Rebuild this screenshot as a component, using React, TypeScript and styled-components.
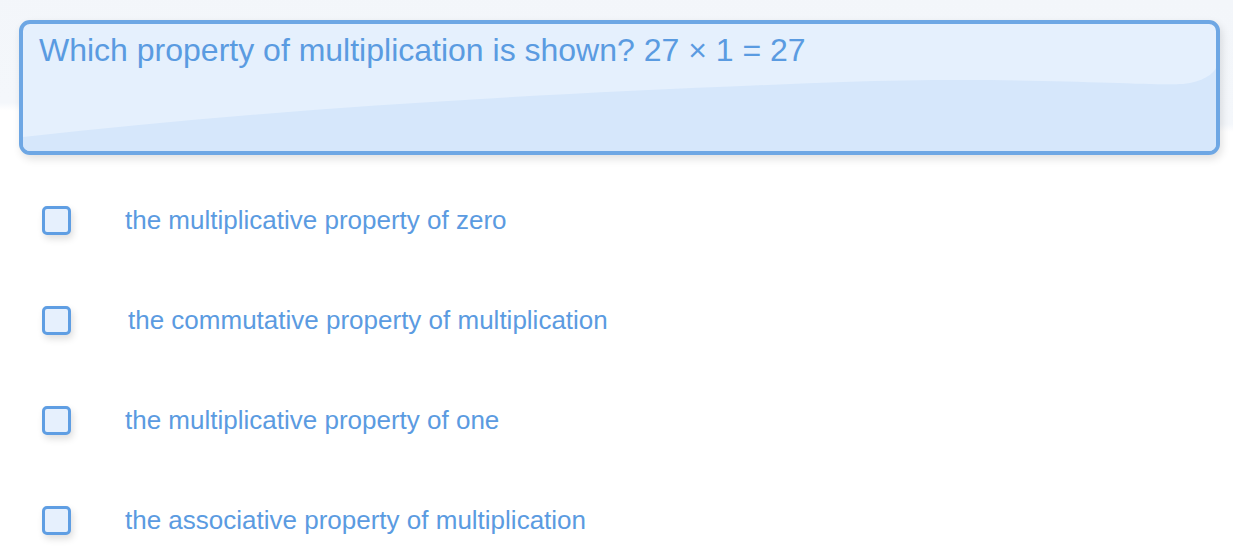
import React from 'react';
import styled, { createGlobalStyle } from 'styled-components';

const GlobalStyle = createGlobalStyle`
  html, body {
    margin: 0;
    padding: 0;
    background: #ffffff;
  }
  body {
    font-family: "Liberation Sans", Arial, sans-serif;
  }
`;

const options = [
  { id: 1, text: 'the multiplicative property of zero', nudge: 0 },
  { id: 2, text: 'the commutative property of multiplication', nudge: 3 },
  { id: 3, text: 'the multiplicative property of one', nudge: 0 },
  { id: 4, text: 'the associative property of multiplication', nudge: 0 },
];

export default function App(): JSX.Element {
  return (
    <Page>
      <GlobalStyle />
      <Question>
        <Gloss viewBox="0 0 1193 127" preserveAspectRatio="none">
          <path
            d="M0 113 C 250 85, 500 70, 820 58 C 1000 52, 1120 62, 1160 60 C 1180 58, 1190 50, 1193 44 L1193 127 L0 127 Z"
            fill="#d6e7fb"
          />
        </Gloss>
        <QuestionText>Which property of multiplication is shown? 27 × 1 = 27</QuestionText>
      </Question>
      <Options>
        {options.map((o) => (
          <Option key={o.id}>
            <Box />
            <Label nudge={o.nudge}>{o.text}</Label>
          </Option>
        ))}
      </Options>
    </Page>
  );
}

const Page = styled.div`
  width: 1233px;
  height: 547px;
  box-sizing: border-box;
  padding: 20px 0 0 19px;
  overflow: hidden;
  background: linear-gradient(181deg, #f3f6fa 0, #f4f7fb 124px, #ffffff 132px);
`;

const Question = styled.div`
  position: relative;
  width: 1201px;
  height: 135px;
  box-sizing: border-box;
  border: 4px solid #6ea7e4;
  border-radius: 11px;
  background: #e5f0fd;
  box-shadow: 2px 4px 8px rgba(0, 0, 0, 0.12);
  overflow: hidden;
  padding: 8px 0 0 16px;
`;

const Gloss = styled.svg`
  position: absolute;
  left: 0;
  top: 0;
  width: 100%;
  height: 100%;
`;

const QuestionText = styled.div`
  position: relative;
  font-size: 32px;
  line-height: 36px;
  color: #5a9be1;
`;

const Options = styled.div`
  display: flex;
  flex-direction: column;
  padding: 15px 0 0 23px;
`;

const Option = styled.div`
  height: 100px;
  display: flex;
  align-items: center;
`;

const Box = styled.div`
  width: 29px;
  height: 29px;
  box-sizing: border-box;
  border: 3px solid #5f9ee3;
  border-radius: 5px;
  background: #e6f0fd;
  box-shadow: 2px 4px 7px rgba(0, 0, 0, 0.13);
  flex-shrink: 0;
`;

const Label = styled.div<{ nudge: number }>`
  margin-left: ${(p) => 54 + p.nudge}px;
  font-size: 26px;
  line-height: 30px;
  color: #5b9be1;
`;
